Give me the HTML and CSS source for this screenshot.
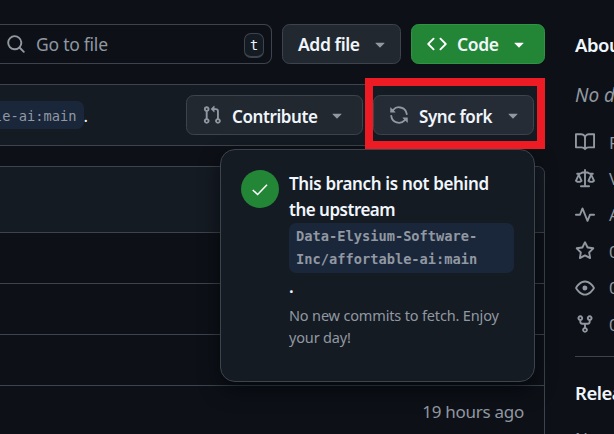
FILE: index.html
```
<!DOCTYPE html>
<html lang="en">
<head>
<meta charset="utf-8">
<title>Repository</title>
<link rel="stylesheet" href="styles.css">
</head>
<body>
<svg class="defs" aria-hidden="true">
<symbol id="caret" viewBox="0 0 16 16"><path d="m4.427 7.427 3.396 3.396a.25.25 0 0 0 .354 0l3.396-3.396A.25.25 0 0 0 11.396 7H4.604a.25.25 0 0 0-.177.427Z"/></symbol>
</svg>
<div class="page">
<main class="main">
<div class="toolbar">
<div class="search">
<svg class="icon" viewBox="0 0 16 16"><path d="M10.68 11.74a6 6 0 0 1-7.922-8.982 6 6 0 0 1 8.982 7.922l3.04 3.04a.749.749 0 0 1-.326 1.275.749.749 0 0 1-.734-.215ZM11.5 7a4.499 4.499 0 1 0-8.997 0A4.499 4.499 0 0 0 11.5 7Z"/></svg>
<span class="search-text">Go to file</span><kbd>t</kbd>
</div>
<div class="btn add"><span>Add file</span><svg class="icon caret"><use href="#caret"/></svg></div>
<div class="btn code"><svg class="icon" viewBox="0 0 16 16"><path d="m11.28 3.22 4.25 4.25a.75.75 0 0 1 0 1.06l-4.25 4.25a.749.749 0 0 1-1.275-.326.749.749 0 0 1 .215-.734L13.94 8l-3.72-3.72a.749.749 0 0 1 .326-1.275.749.749 0 0 1 .734.215Zm-6.56 0a.751.751 0 0 1 1.042.018.751.751 0 0 1 .018 1.042L2.06 8l3.72 3.72a.749.749 0 0 1-.326 1.275.749.749 0 0 1-.734-.215L.47 8.53a.75.75 0 0 1 0-1.06Z"/></svg><span>Code</span><svg class="icon caret"><use href="#caret"/></svg></div>
</div>
<div class="branch-bar">
<div class="branch-note"><code>le-ai:main</code><span>.</span></div>
<div class="btn contribute"><svg class="icon" viewBox="0 0 16 16"><path d="M1.5 3.25a2.25 2.25 0 1 1 3 2.122v5.256a2.251 2.251 0 1 1-1.5 0V5.372A2.25 2.25 0 0 1 1.5 3.25Zm5.677-.177L9.573.677A.25.25 0 0 1 10 .854V2.5h1A2.5 2.5 0 0 1 13.5 5v5.628a2.251 2.251 0 1 1-1.5 0V5a1 1 0 0 0-1-1h-1v1.646a.25.25 0 0 1-.427.177L7.177 3.427a.25.25 0 0 1 0-.354ZM3.75 2.5a.75.75 0 1 0 0 1.5.75.75 0 0 0 0-1.5Zm0 9.5a.75.75 0 1 0 0 1.5.75.75 0 0 0 0-1.5Zm8.25.75a.75.75 0 1 0 1.5 0 .75.75 0 0 0-1.5 0Z"/></svg><span>Contribute</span><svg class="icon caret"><use href="#caret"/></svg></div>
<div class="btn sync"><svg class="icon" viewBox="0 0 16 16"><path d="M1.705 8.005a.75.75 0 0 1 .834.656 5.5 5.5 0 0 0 9.592 2.97l-1.204-1.204a.25.25 0 0 1 .177-.427h3.646a.25.25 0 0 1 .25.25v3.646a.25.25 0 0 1-.427.177l-1.38-1.38A7.002 7.002 0 0 1 1.05 8.84a.75.75 0 0 1 .656-.834ZM8 2.5a5.487 5.487 0 0 0-4.131 1.869l1.204 1.204A.25.25 0 0 1 4.896 6H1.25A.25.25 0 0 1 1 5.75V2.104a.25.25 0 0 1 .427-.177l1.38 1.38A7.002 7.002 0 0 1 14.95 7.16a.75.75 0 0 1-1.49.178A5.5 5.5 0 0 0 8 2.5Z"/></svg><span>Sync fork</span><svg class="icon caret"><use href="#caret"/></svg></div>
</div>
<div class="files">
<div class="files-head"></div>
<div class="row"></div><div class="row"></div><div class="row"></div>
<div class="row"><span class="ago">19 hours ago</span></div>
</div>
</main>
<aside class="side">
<h2 class="about">About</h2>
<p class="desc">No description</p>
<ul>
<li><svg class="icon" viewBox="0 0 16 16"><path d="M0 1.75A.75.75 0 0 1 .75 1h4.253c1.227 0 2.317.59 3 1.501A3.743 3.743 0 0 1 11.006 1h4.245a.75.75 0 0 1 .75.75v10.5a.75.75 0 0 1-.75.75h-4.507a2.25 2.25 0 0 0-1.591.659l-.622.621a.75.75 0 0 1-1.06 0l-.622-.621A2.25 2.25 0 0 0 5.258 13H.75a.75.75 0 0 1-.75-.75Zm7.251 10.324.004-5.073-.002-2.253A2.25 2.25 0 0 0 5.003 2.5H1.5v9h3.757a3.75 3.75 0 0 1 1.994.574ZM8.755 4.75l-.004 7.322a3.752 3.752 0 0 1 1.992-.572H14.5v-9h-3.495a2.25 2.25 0 0 0-2.25 2.25Z"/></svg><span>Readme</span></li>
<li><svg class="icon" viewBox="0 0 16 16"><path d="M8.75.75V2h.985c.304 0 .603.08.867.231l1.29.736c.038.022.08.033.124.033h2.234a.75.75 0 0 1 0 1.5h-.427l2.111 4.692a.75.75 0 0 1-.154.838l-.53-.53.529.531-.001.002-.002.002-.006.006-.006.005-.01.01-.045.04c-.21.176-.441.327-.686.45C14.556 10.78 13.88 11 13 11a4.498 4.498 0 0 1-2.023-.454 3.544 3.544 0 0 1-.686-.45l-.045-.04-.016-.015-.006-.006-.004-.004v-.001a.75.75 0 0 1-.154-.838L12.178 4.5h-.162c-.305 0-.604-.079-.868-.231l-1.29-.736a.245.245 0 0 0-.124-.033H8.75V13h2.5a.75.75 0 0 1 0 1.5h-6.5a.75.75 0 0 1 0-1.5h2.5V3.5h-.984a.245.245 0 0 0-.124.033l-1.289.737c-.265.15-.564.23-.869.23h-.162l2.112 4.692a.75.75 0 0 1-.154.838l-.53-.53.529.531-.001.002-.002.002-.006.006-.016.015-.045.04c-.21.176-.441.327-.686.45C4.556 10.78 3.88 11 3 11a4.498 4.498 0 0 1-2.023-.454 3.544 3.544 0 0 1-.686-.45l-.045-.04-.016-.015-.006-.006-.004-.004v-.001a.75.75 0 0 1-.154-.838L2.178 4.5H1.75a.75.75 0 0 1 0-1.5h2.234a.249.249 0 0 0 .125-.033l1.288-.737c.265-.15.564-.23.869-.23h.984V.75a.75.75 0 0 1 1.5 0Zm2.945 8.477c.285.135.718.273 1.305.273s1.02-.138 1.305-.273L13 6.327Zm-10 0c.285.135.718.273 1.305.273s1.02-.138 1.305-.273L3 6.327Z"/></svg><span>View license</span></li>
<li><svg class="icon" viewBox="0 0 16 16"><path d="M6 2c.306 0 .582.187.696.471L10 10.731l1.304-3.26A.751.751 0 0 1 12 7h3.25a.75.75 0 0 1 0 1.5h-2.742l-1.812 4.528a.751.751 0 0 1-1.392 0L6 4.77 4.696 8.03A.75.75 0 0 1 4 8.5H.75a.75.75 0 0 1 0-1.5h2.742l1.812-4.529A.751.751 0 0 1 6 2Z"/></svg><span>Activity</span></li>
<li><svg class="icon" viewBox="0 0 16 16"><path d="M8 .25a.75.75 0 0 1 .673.418l1.882 3.815 4.21.612a.75.75 0 0 1 .416 1.279l-3.046 2.97.719 4.192a.751.751 0 0 1-1.088.791L8 12.347l-3.766 1.98a.75.75 0 0 1-1.088-.79l.72-4.194L.818 6.374a.75.75 0 0 1 .416-1.28l4.21-.611L7.327.668A.75.75 0 0 1 8 .25Zm0 2.445L6.615 5.5a.75.75 0 0 1-.564.41l-3.097.45 2.24 2.184a.75.75 0 0 1 .216.664l-.528 3.084 2.769-1.456a.75.75 0 0 1 .698 0l2.77 1.456-.53-3.084a.75.75 0 0 1 .216-.664l2.24-2.183-3.096-.45a.75.75 0 0 1-.564-.41L8 2.694Z"/></svg><span>0 stars</span></li>
<li><svg class="icon" viewBox="0 0 16 16"><path d="M8 2c1.981 0 3.671.992 4.933 2.078 1.27 1.091 2.187 2.345 2.637 3.023a1.62 1.62 0 0 1 0 1.798c-.45.678-1.367 1.932-2.637 3.023C11.67 13.008 9.981 14 8 14c-1.981 0-3.671-.992-4.933-2.078C1.797 10.83.88 9.576.43 8.898a1.62 1.62 0 0 1 0-1.798c.45-.677 1.367-1.931 2.637-3.022C4.33 2.992 6.019 2 8 2ZM1.679 7.932a.12.12 0 0 0 0 .136c.411.622 1.241 1.75 2.366 2.717C5.176 11.758 6.527 12.5 8 12.5c1.473 0 2.825-.742 3.955-1.715 1.124-.967 1.954-2.096 2.366-2.717a.12.12 0 0 0 0-.136c-.412-.621-1.242-1.75-2.366-2.717C10.824 4.242 9.473 3.5 8 3.5c-1.473 0-2.825.742-3.955 1.715-1.124.967-1.954 2.096-2.366 2.717ZM8 10a2 2 0 1 1-.001-3.999A2 2 0 0 1 8 10Z"/></svg><span>0 watching</span></li>
<li><svg class="icon" viewBox="0 0 16 16"><path d="M5 5.372v.878c0 .414.336.75.75.75h4.5a.75.75 0 0 0 .75-.75v-.878a2.25 2.25 0 1 1 1.5 0v.878a2.25 2.25 0 0 1-2.25 2.25h-1.5v2.128a2.251 2.251 0 1 1-1.5 0V8.5h-1.5A2.25 2.25 0 0 1 3.5 6.25v-.878a2.25 2.25 0 1 1 1.5 0ZM5 3.25a.75.75 0 1 0-1.5 0 .75.75 0 0 0 1.5 0Zm6.75.75a.75.75 0 1 0 0-1.5.75.75 0 0 0 0 1.5Zm-3 8.75a.75.75 0 1 0-1.5 0 .75.75 0 0 0 1.5 0Z"/></svg><span>0 forks</span></li>
</ul>
<h2 class="releases">Releases</h2>
<p class="none">No releases</p>
</aside>
</div>
<div class="popover">
<div class="badge"><svg class="icon" viewBox="0 0 16 16"><path d="m2.2 8.8 3.9 3.6 7.5-7.8"/></svg></div>
<div class="pop-body">
<div class="pop-title"><span class="t1">This branch is not behind</span><br><span class="t2">the upstream</span></div>
<code class="pop-code">Data-Elysium-Software-<br>Inc/affortable-ai:main</code>
<div class="dot">.</div>
<div class="pop-note"><span class="n1">No new commits to fetch. Enjoy</span><br><span class="n2">your day!</span></div>
</div>
</div>
<div class="highlight"></div>
</body>
</html>
```
FILE: styles.css
```
* { box-sizing: border-box; }
html, body { margin: 0; height: 434px; overflow: hidden; }
body { position: relative; background: #0d1117; color: #f0f6fc; font-family: "Noto Sans", "Open Sans", sans-serif; font-size: 17px; }
.defs { position: absolute; width: 0; height: 0; }
.page { display: flex; width: 614px; height: 434px; overflow: hidden; }
.main { width: 545px; flex: none; }
.icon { width: 20px; height: 20px; flex: none; fill: #9198a1; }
span { white-space: nowrap; }

.toolbar { display: flex; gap: 10px; padding-top: 24px; }
.search { width: 272px; height: 40px; border: 1px solid #3d444d; border-left: 0; border-radius: 0 7.5px 7.5px 0; display: flex; align-items: center; padding: 0 7px 0 6px; color: #9198a1; }
.search-text { margin-left: 10px; flex: 1; font-size: 17.5px; letter-spacing: -.25px; }
kbd { width: 20px; height: 25px; margin-top: 2px; border: 1px solid #3d444d; border-bottom-width: 2px; border-radius: 7px; background: #151b23; color: #f0f6fc; font: 13.7px/23px "DejaVu Sans Mono", monospace; text-align: center; }
.btn { height: 40px; flex: none; display: flex; align-items: center; border: 1px solid #3d444d; border-radius: 7.5px; background: #212830; font-weight: 600; white-space: nowrap; }
.btn .caret { margin-left: auto; }
.add { width: 119px; padding: 0 10px 0 15px; }
.add span { font-size: 17.5px; }
.code { width: 134px; padding: 0 15px; background: #238636; border-color: #2f9443; }
.code .icon { fill: #fff; }
.code span { margin-left: 10px; font-size: 17.5px; }
.btn span { letter-spacing: -.4px; }

.branch-bar { height: 62px; margin-top: 20px; padding-right: 10px; border: 1px solid #3d444d; border-left: 0; border-radius: 0 7.5px 7.5px 0; background: #151b23; display: flex; align-items: center; gap: 10px; }
.branch-note { flex: 1; display: flex; align-items: center; min-width: 0; }
.branch-note code { margin-left: -6px; height: 28px; padding: 1px 8px 0 0; border-radius: 0 7px 7px 0; background: #1a263a; color: #9198a1; font: 13.7px/28px "DejaVu Sans Mono", monospace; }
.branch-note span { margin-left: -1px; }
.contribute { width: 177px; padding: 0 15px; }
.sync { width: 161px; padding: 0 10px 0 15px; background: #262c36; }
.contribute span, .sync span { margin-left: 10px; padding-top: 2px; }

.files { margin-top: 20px; height: 300px; border: 1px solid #3d444d; border-left: 0; border-top-right-radius: 7.5px; overflow: hidden; }
.files-head { height: 65px; background: #151b23; }
.row { height: 51px; border-top: 1px solid #3d444d; display: flex; justify-content: flex-end; align-items: center; padding-right: 20px; color: #9198a1; }
.ago { letter-spacing: -.27px; }

.side { margin-left: 30px; width: 39px; flex: none; }
h2 { margin: 0; font-size: 18.5px; line-height: 26px; font-weight: 600; letter-spacing: -.5px; }
.about { margin-top: 32px; }
.desc { margin: 22px 0 0; font-size: 19px; line-height: 30px; font-style: italic; color: #9198a1; white-space: nowrap; }
ul { list-style: none; margin: 0; padding: 14px 0 14px; border-bottom: 1px solid #3d444d; }
li { height: 36.4px; display: flex; align-items: center; color: #9198a1; }
li span { margin-left: 14px; }
.releases { margin-top: 23px; }
.none { margin: 22px 0 0; line-height: 22px; font-size: 17px; color: #9198a1; white-space: nowrap; }

.popover { position: absolute; left: 220px; top: 149px; width: 315px; height: 233px; border: 1px solid #3d444d; border-radius: 15px; background: #151b23; box-shadow: 0 8px 20px rgba(1,4,9,.65); padding: 20px; display: flex; gap: 10px; }
.badge { width: 38px; height: 38px; border-radius: 50%; background: #238636; display: flex; align-items: center; justify-content: center; flex: none; }
.badge .icon { fill: none; stroke: #fff; stroke-width: 1.25; }
.pop-body { width: 226px; }
.pop-title { padding-top: 1px; font-weight: 600; line-height: 26px; letter-spacing: -.34px; }
.t2 { letter-spacing: -.5px; }
.pop-code { display: block; height: 50px; padding: 2px 7px; border-radius: 7px; background: #1a263a; color: #9198a1; font: bold 13.7px/23px "DejaVu Sans Mono", monospace; white-space: nowrap; }
.dot { font-weight: 600; line-height: 26px; margin-top: 1px; }
.pop-note { margin-top: 4px; color: #9198a1; font-size: 14.5px; line-height: 22px; letter-spacing: -.16px; }
.highlight { position: absolute; left: 365px; top: 78px; width: 180px; height: 71px; border: 8px solid #ed1c24; }
```
